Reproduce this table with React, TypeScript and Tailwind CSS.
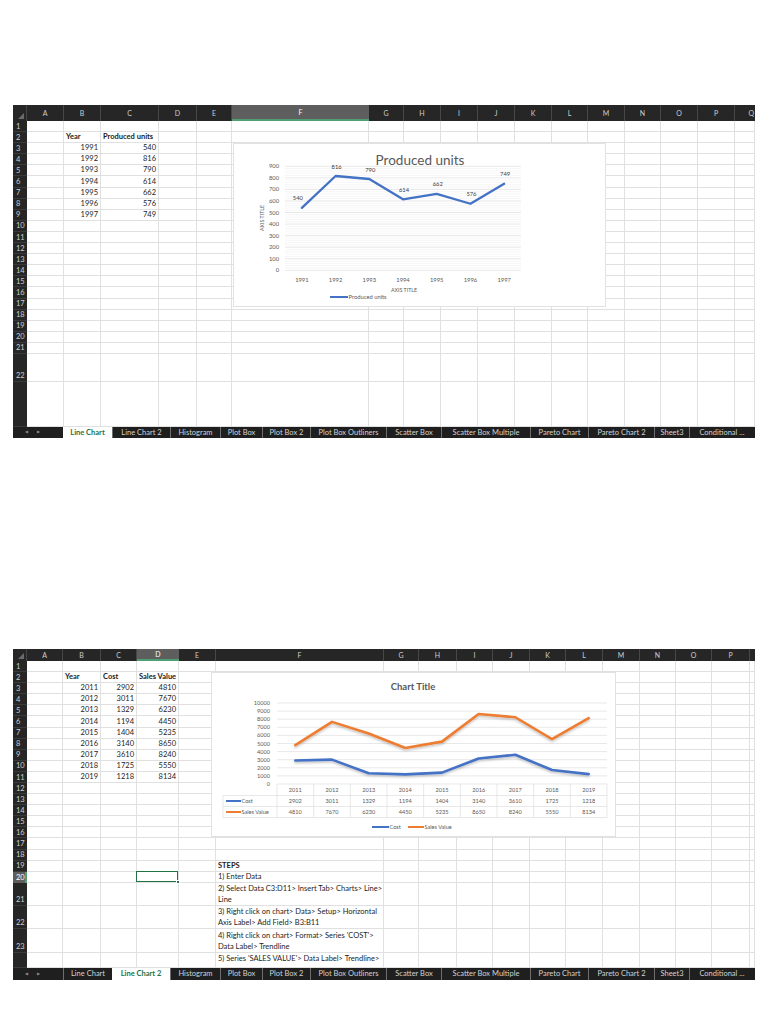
import React from "react";
import type { ReactNode } from "react";

type Cell = { lines: string[]; bold?: boolean; right?: boolean; top?: boolean };

const COLS = "ABCDEFGHIJKLMNOPQ".split("");

const TABS = [
  { name: "Line Chart", w: "w-[49px]" },
  { name: "Line Chart 2", w: "w-[58px]" },
  { name: "Histogram", w: "w-[50px]" },
  { name: "Plot Box", w: "w-[42px]" },
  { name: "Plot Box 2", w: "w-[48px]" },
  { name: "Plot Box Outliners", w: "w-[76px]" },
  { name: "Scatter Box", w: "w-[55px]" },
  { name: "Scatter Box Multiple", w: "w-[89px]" },
  { name: "Pareto Chart", w: "w-[58px]" },
  { name: "Pareto Chart 2", w: "w-[66px]" },
  { name: "Sheet3", w: "w-[35px]" },
  { name: "Conditional ...", w: "w-[65px]" },
];

const produced: [number, number][] = [
  [1991, 540],
  [1992, 816],
  [1993, 790],
  [1994, 614],
  [1995, 662],
  [1996, 576],
  [1997, 749],
];

const years2 = [2011, 2012, 2013, 2014, 2015, 2016, 2017, 2018, 2019];
const cost = [2902, 3011, 1329, 1194, 1404, 3140, 3610, 1725, 1218];
const sales = [4810, 7670, 6230, 4450, 5235, 8650, 8240, 5550, 8134];

function sheet1Cells() {
  const cells: Record<string, Cell> = {
    B2: { lines: ["Year"], bold: true },
    C2: { lines: ["Produced units"], bold: true },
  };
  produced.forEach(([y, v], i) => {
    cells["B" + (i + 3)] = { lines: [String(y)], right: true };
    cells["C" + (i + 3)] = { lines: [String(v)], right: true };
  });
  return cells;
}

function sheet2Cells() {
  const cells: Record<string, Cell> = {
    B2: { lines: ["Year"], bold: true },
    C2: { lines: ["Cost"], bold: true },
    D2: { lines: ["Sales Value"], bold: true },
    F19: { lines: ["STEPS"], bold: true },
    F20: { lines: ["1) Enter Data"] },
    F21: { lines: ["2) Select Data C3:D11> Insert Tab> Charts> Line>", "Line"] },
    F22: { lines: ["3) Right click on chart> Data> Setup> Horizontal", "Axis Label> Add Field> B3:B11"] },
    F23: { lines: ["4) Right click on chart> Format> Series 'COST'>", "Data Label> Trendline"] },
    F24: { lines: ["5) Series 'SALES VALUE'> Data Label> Trendline>"], top: true },
  };
  years2.forEach((y, i) => {
    cells["B" + (i + 3)] = { lines: [String(y)], right: true };
    cells["C" + (i + 3)] = { lines: [String(cost[i])], right: true };
    cells["D" + (i + 3)] = { lines: [String(sales[i])], right: true };
  });
  return cells;
}

function TabBar({ active, height }: { active: string; height: string }) {
  return (
    <div className={`flex ${height} bg-[#1f1f1f] text-[7.5px] leading-none`}>
      <div className="w-[50px] flex items-center gap-[9px] pl-[12px] text-[#8c8c8c] text-[4px]">
        <span>◀</span>
        <span>▶</span>
      </div>
      {TABS.map((t) =>
        t.name === active ? (
          <div key={t.name} className={`${t.w} flex items-center justify-center bg-white font-bold text-[#217346]`}>
            {t.name}
          </div>
        ) : (
          <div
            key={t.name}
            className={`${t.w} flex items-center justify-center border-l border-[#6e6e6e] text-[#d2d2d2] whitespace-nowrap`}
          >
            {t.name}
          </div>
        )
      )}
    </div>
  );
}

interface SheetProps {
  grid: string;
  rows: number;
  lastLabel: number;
  cells: Record<string, Cell>;
  selCol: string;
  selRow?: number;
  selCell?: string;
  showQ: boolean;
  active: string;
  tabHeight: string;
  children?: ReactNode;
}

function Sheet({ grid, rows, lastLabel, cells, selCol, selRow, selCell, showQ, active, tabHeight, children }: SheetProps) {
  const body: ReactNode[] = [];
  for (let r = 1; r <= rows; r++) {
    body.push(
      <div
        key={"rh" + r}
        className={
          r === selRow
            ? "flex items-end pl-[3px] pb-[1px] bg-[#5e5e5e] border-r-2 border-[#4f9f74] text-[7.5px] leading-none text-white"
            : "flex items-end pl-[3px] pb-[1px] bg-[#262626] border-b border-[#3a3a3a] text-[7.5px] leading-none text-[#cfcfcf]"
        }
      >
        {r <= lastLabel ? r : ""}
      </div>
    );
    for (const c of COLS) {
      const key = c + r;
      const cell = cells[key];
      body.push(
        <div
          key={key}
          className={[
            "relative flex flex-col px-[2px] whitespace-nowrap border-r border-b border-[#e0e0e0] text-[7.5px] leading-[11px] text-[#1c1c1c]",
            cell?.top ? "justify-start" : "justify-end",
            cell?.right ? "text-right" : "",
            cell?.bold ? "font-bold" : "",
          ].join(" ")}
        >
          {cell?.lines.map((l) => <span key={l}>{l}</span>)}
          {key === selCell && (
            <div className="absolute -left-px -top-px right-0 bottom-0 z-10 border-[1.5px] border-[#217346]">
              <div className="absolute -right-[3px] -bottom-[3px] w-[4px] h-[4px] bg-[#217346] border border-white" />
            </div>
          )}
        </div>
      );
    }
  }

  return (
    <div className="w-[742px]">
      <div className={`relative grid overflow-hidden ${grid}`}>
        <div className="flex items-end justify-end pr-[2px] pb-[2px] bg-[#262626] border-r border-[#444]">
          <svg width="6" height="6" viewBox="0 0 6 6">
            <polygon points="6,0 6,6 0,6" fill="#6a6a6a" />
          </svg>
        </div>
        {COLS.map((c) =>
          c === selCol ? (
            <div
              key={"h" + c}
              className="flex items-center justify-center bg-[#5e5e5e] border-b-2 border-[#4f9f74] text-[7px] text-white"
            >
              {c}
            </div>
          ) : c === "Q" ? (
            <div key="hQ" className="flex items-center justify-end pr-[1px] bg-[#262626] text-[7px] text-[#cfcfcf]">
              {showQ ? "Q" : ""}
            </div>
          ) : (
            <div
              key={"h" + c}
              className="flex items-center justify-center bg-[#262626] border-r border-[#474747] text-[7px] text-[#cfcfcf]"
            >
              {c}
            </div>
          )
        )}
        {body}
        {children}
      </div>
      <TabBar active={active} height={tabHeight} />
    </div>
  );
}

function ProducedChart() {
  const x0 = 51;
  const x1 = 287;
  const yZero = 126.3;
  const k = 104 / 900;
  const cw = (x1 - x0) / 7;
  const cx = (i: number) => x0 + cw * (i + 0.5);
  const cy = (v: number) => yZero - v * k;
  const minor: number[] = [];
  for (let v = 20; v <= 900; v += 20) if (v % 100 !== 0) minor.push(v);
  const major = [0, 100, 200, 300, 400, 500, 600, 700, 800, 900];

  return (
    <svg width="373" height="164" viewBox="0 0 373 164" className="block">
      <text x="186" y="21" textAnchor="middle" fontSize="13.5" fill="#595959">
        Produced units
      </text>
      {minor.map((v) => (
        <line key={"m" + v} x1={x0} x2={x1} y1={cy(v)} y2={cy(v)} stroke="#ececec" strokeWidth="0.5" />
      ))}
      {major.map((v) => (
        <g key={"g" + v}>
          <line x1={x0} x2={x1} y1={cy(v)} y2={cy(v)} stroke="#d9d9d9" strokeWidth="0.6" />
          <text x="45" y={cy(v) + 2} textAnchor="end" fontSize="5.8" fill="#595959">
            {v}
          </text>
        </g>
      ))}
      <polyline
        points={produced.map(([, v], i) => `${cx(i)},${cy(v)}`).join(" ")}
        fill="none"
        stroke="#4472c4"
        strokeWidth="2.3"
        strokeLinejoin="round"
        strokeLinecap="round"
      />
      {produced.map(([y, v], i) => (
        <g key={y}>
          <text x={i === 0 ? cx(i) - 4 : cx(i) + 1} y={cy(v) - 7.5} textAnchor="middle" fontSize="5.8" fill="#404040">
            {v}
          </text>
          <text x={cx(i)} y="137.5" textAnchor="middle" fontSize="5.8" fill="#595959">
            {y}
          </text>
        </g>
      ))}
      <text x="170" y="148" textAnchor="middle" fontSize="5.3" fill="#595959">
        AXIS TITLE
      </text>
      <text x="30" y="74" textAnchor="middle" fontSize="5.3" fill="#595959" transform="rotate(-90 30 74)">
        AXIS TITLE
      </text>
      <line x1="96" x2="114" y1="153" y2="153" stroke="#4472c4" strokeWidth="2" />
      <text x="114.5" y="155" fontSize="5.8" fill="#595959">
        Produced units
      </text>
    </svg>
  );
}

function SalesChart() {
  const x0 = 65;
  const x1 = 395;
  const yZero = 111;
  const k = 81 / 10000;
  const cw = (x1 - x0) / 9;
  const cx = (i: number) => x0 + cw * (i + 0.5);
  const cy = (v: number) => yZero - v * k;
  const ticks = [0, 1000, 2000, 3000, 4000, 5000, 6000, 7000, 8000, 9000, 10000];
  const line = (vals: number[]) => vals.map((v, i) => `${cx(i)},${cy(v)}`).join(" ");

  return (
    <svg width="405" height="165" viewBox="0 0 405 165" className="block">
      <defs>
        <filter id="shadow" x="-10%" y="-20%" width="120%" height="150%">
          <feDropShadow dx="0" dy="1.5" stdDeviation="1" floodColor="#000" floodOpacity="0.25" />
        </filter>
      </defs>
      <text x="201" y="17" textAnchor="middle" fontSize="9.5" fontWeight="bold" fill="#595959">
        Chart Title
      </text>
      {ticks.map((v) => (
        <g key={v}>
          {v > 0 && <line x1={x0} x2={x1} y1={cy(v)} y2={cy(v)} stroke="#d9d9d9" strokeWidth="0.6" />}
          <text x="58" y={cy(v) + 2} textAnchor="end" fontSize="5.6" fill="#595959">
            {v}
          </text>
        </g>
      ))}
      <polyline
        points={line(sales)}
        fill="none"
        stroke="#ed7d31"
        strokeWidth="2.6"
        strokeLinejoin="round"
        strokeLinecap="round"
        filter="url(#shadow)"
      />
      <polyline
        points={line(cost)}
        fill="none"
        stroke="#4472c4"
        strokeWidth="2.6"
        strokeLinejoin="round"
        strokeLinecap="round"
        filter="url(#shadow)"
      />
      <line x1={x0} x2={x1} y1="111" y2="111" stroke="#d9d9d9" strokeWidth="0.6" />
      {[122.5, 133.5, 144.5].map((y) => (
        <line key={y} x1="11" x2={x1} y1={y} y2={y} stroke="#d9d9d9" strokeWidth="0.6" />
      ))}
      <line x1="11" x2="11" y1="122.5" y2="144.5" stroke="#d9d9d9" strokeWidth="0.6" />
      {Array.from({ length: 10 }, (_, i) => (
        <line key={i} x1={x0 + cw * i} x2={x0 + cw * i} y1="111" y2="144.5" stroke="#d9d9d9" strokeWidth="0.6" />
      ))}
      {years2.map((y, i) => (
        <g key={y} fontSize="5.6" fill="#595959" textAnchor="middle">
          <text x={cx(i)} y="119">
            {y}
          </text>
          <text x={cx(i)} y="130">
            {cost[i]}
          </text>
          <text x={cx(i)} y="141">
            {sales[i]}
          </text>
        </g>
      ))}
      <line x1="14" x2="29" y1="128" y2="128" stroke="#4472c4" strokeWidth="2" />
      <text x="29.5" y="130" fontSize="5.6" fill="#595959">
        Cost
      </text>
      <line x1="14" x2="29" y1="139" y2="139" stroke="#ed7d31" strokeWidth="2" />
      <text x="29.5" y="141" fontSize="5.6" fill="#595959">
        Sales Value
      </text>
      <line x1="160" x2="177" y1="154" y2="154" stroke="#4472c4" strokeWidth="2" />
      <text x="177.5" y="156" fontSize="5.6" fill="#595959">
        Cost
      </text>
      <line x1="196" x2="212" y1="154" y2="154" stroke="#ed7d31" strokeWidth="2" />
      <text x="212.5" y="156" fontSize="5.6" fill="#595959">
        Sales Value
      </text>
    </svg>
  );
}

export default function App() {
  return (
    <div className="w-[768px] h-[1024px] bg-white pt-[105px] pl-[13px] [font-family:Lato,'Liberation_Sans',sans-serif]">
      <Sheet
        grid="grid-cols-[14px_37px_37px_58px_38px_35px_137px_35px_37px_37px_37px_37px_36px_37px_36px_37px_37px_20px] grid-rows-[16px_repeat(21,11.1px)_28px_45px]"
        rows={23}
        lastLabel={22}
        cells={sheet1Cells()}
        selCol="F"
        showQ
        active="Line Chart"
        tabHeight="h-[11px]"
      >
        <div className="absolute left-[220px] top-[38px] w-[373px] h-[164px] bg-white border border-[#e2e2e2] z-20">
          <ProducedChart />
        </div>
      </Sheet>

      <div className="h-[211px]" />

      <Sheet
        grid="grid-cols-[14px_36px_38px_36px_42px_37px_168px_35px_38px_36px_37px_36px_37px_37px_36px_36px_38px_5px] grid-rows-[12px_repeat(19,11.1px)_11px_23px_23px_24px_15px]"
        rows={24}
        lastLabel={23}
        cells={sheet2Cells()}
        selCol="D"
        selRow={20}
        selCell="D20"
        showQ={false}
        active="Line Chart 2"
        tabHeight="h-[12px]"
      >
        <div className="absolute left-[198px] top-[23px] w-[405px] h-[165px] bg-white border border-[#e2e2e2] z-20">
          <SalesChart />
        </div>
      </Sheet>
    </div>
  );
}
